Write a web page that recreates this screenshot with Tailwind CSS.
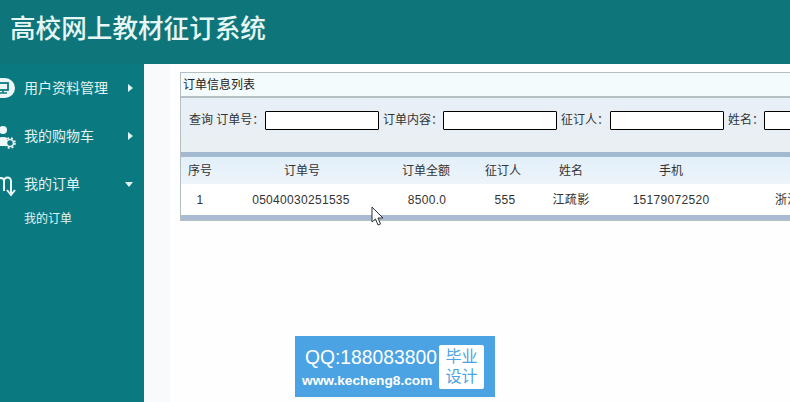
<!DOCTYPE html>
<html lang="zh-CN">
<head>
  <meta charset="UTF-8">
  <title>高校网上教材征订系统</title>
  <script src="https://cdn.jsdelivr.net/npm/@tailwindcss/browser@4"></script>
</head>
<body class="relative w-[790px] h-[402px] overflow-hidden bg-white text-[#333] text-[12px] font-['Liberation_Sans','Noto_Sans_CJK_SC',sans-serif]">
  <!-- Header -->
  <header class="h-[64px] bg-[#0e767a] flex items-center pl-[10px] pb-[4px]">
    <h1 class="text-[25.6px] leading-none font-medium text-[#e6f7f5] whitespace-nowrap">高校网上教材征订系统</h1>
  </header>
  <div class="flex h-[338px]">
    <!-- Sidebar -->
    <aside class="w-[144px] shrink-0 bg-[#0a7a80] text-[#e3f3f3]">
      <div class="h-[48px] flex items-center relative">
        <svg class="absolute left-[-10px] top-[14px] w-[25px] h-[20px]" viewBox="0 0 25 20"><rect x="0" y="0" width="25" height="20" rx="10" fill="#eef8f8"/><rect x="8" y="5" width="10" height="7" fill="none" stroke="#0b7c81" stroke-width="1.8"/><path d="M9 15h8M13 12v3" stroke="#0b7c81" stroke-width="1.6"/></svg>
        <span class="ml-[24px] text-[14px] w-[104px]">用户资料管理</span>
        <span class="w-0 h-0 border-y-[4px] border-y-transparent border-l-[5px] border-l-[#e3f3f3]"></span>
      </div>
      <div class="h-[48px] flex items-center relative">
        <svg class="absolute left-[-4px] top-[13px] w-[20px] h-[24px]" viewBox="0 0 20 24"><circle cx="7" cy="5" r="4" fill="#eef8f8"/><path d="M0 21c0-7 3-9 7-9 1.500 0 3 .4 4 1v8z" fill="#eef8f8"/><circle cx="14" cy="18" r="3.500" fill="none" stroke="#eef8f8" stroke-width="1.600"/><circle cx="14" cy="18" r="5" fill="none" stroke="#eef8f8" stroke-width="1.600" stroke-dasharray="2 2"/></svg>
        <span class="ml-[24px] text-[14px] w-[104px]">我的购物车</span>
        <span class="w-0 h-0 border-y-[4px] border-y-transparent border-l-[5px] border-l-[#e3f3f3]"></span>
      </div>
      <div class="h-[48px] flex items-center relative">
        <svg class="absolute left-[-3px] top-[13px] w-[20px] h-[24px]" viewBox="0 0 20 24" fill="none" stroke="#eef8f8" stroke-width="2"><path d="M1 18V8a3 3 0 0 1 6 0v10M7 8a3.500 3.500 0 0 1 7 0v12"/><path d="M10 17l4 5 4-5" stroke-width="2"/></svg>
        <span class="ml-[24px] text-[14px] w-[101px]">我的订单</span>
        <span class="w-0 h-0 border-x-[4.500px] border-x-transparent border-t-[5px] border-t-[#e3f3f3]"></span>
      </div>
      <div class="pl-[24px] pt-[2px] leading-[18px]">我的订单</div>
    </aside>
    <!-- Main -->
    <main class="flex-1 min-w-0 bg-[#fdfefd] flex">
      <div class="w-[26px] shrink-0 bg-[#f8fafb]"></div>
      <div class="flex-1 min-w-0 pl-[10px] pt-[8px] overflow-hidden">
        <section class="w-[640px] border border-[#b4bfc0] border-r-0 bg-white">
          <div class="h-[25px] bg-[#f3fbfc] border-b-[2px] border-[#b5c0c2] pl-[2px] flex items-center text-[#222]">订单信息列表</div>
          <form class="h-[54px] bg-gradient-to-b from-[#e8eff7] to-[#e9eff2] pl-[8px] pt-[13px] flex items-start whitespace-nowrap text-[#333]">
            <label class="w-[76px] shrink-0 leading-[19px]">查询 订单号：</label>
            <input class="w-[114px] shrink-0 h-[19px] bg-white border border-black rounded-[1px]">
            <label class="w-[60px] shrink-0 leading-[19px] ml-[4px]">订单内容：</label>
            <input class="w-[114px] shrink-0 h-[19px] bg-white border border-black rounded-[1px]">
            <label class="w-[49px] shrink-0 leading-[19px] ml-[4px]">征订人：</label>
            <input class="w-[114px] shrink-0 h-[19px] bg-white border border-black rounded-[1px]">
            <label class="w-[36px] shrink-0 leading-[19px] ml-[4px]">姓名：</label>
            <input class="w-[114px] shrink-0 h-[19px] bg-white border border-black rounded-[1px]">
          </form>
          <div class="h-[5px] bg-[#a3b9d0]"></div>
          <div class="h-[27px] bg-gradient-to-b from-[#e2effa] to-[#eef5fa] flex items-center text-[#333]">
            <span class="w-[38px] text-center">序号</span>
            <span class="w-[166px] text-center">订单号</span>
            <span class="w-[82px] text-center">订单全额</span>
            <span class="w-[72px] text-center">征订人</span>
            <span class="w-[64px] text-center">姓名</span>
            <span class="w-[136px] text-center">手机</span>
          </div>
          <div class="h-[31px] bg-white flex items-center text-[#333] tracking-[0.3px]">
            <span class="w-[38px] text-center">1</span>
            <span class="w-[164px] text-center">05040030251535</span>
            <span class="w-[88px] text-center">8500.0</span>
            <span class="w-[68px] text-center">555</span>
            <span class="w-[64px] text-center">江疏影</span>
            <span class="w-[136px] text-center">15179072520</span>
            <span class="ml-[36px] whitespace-nowrap">浙江</span>
          </div>
          <div class="h-[5px] bg-[#a9bad3]"></div>
        </section>
      </div>
    </main>
  </div>
  <!-- Mouse cursor -->
  <svg class="absolute left-[371px] top-[206px] w-[14px] h-[20px]" viewBox="0 0 14 20"><path d="M1 1v15l3.500-3 2.500 6 2.500-1-2.500-6H12z" fill="#fff" stroke="#333" stroke-width="1"/></svg>
  <!-- Watermark -->
  <div class="absolute left-[295px] top-[336px] w-[200px] h-[61px] bg-[#4ba3e3] flex items-center">
    <div class="w-[144px] pl-[7px] pt-[3px] text-white font-bold whitespace-nowrap">
      <div class="text-[19.300px] leading-[22px] pl-[3px] font-normal">QQ:188083800</div>
      <div class="text-[13.700px] leading-[18px] mt-[3px]">www.kecheng8.com</div>
    </div>
    <div class="w-[45px] h-[44px] bg-white rounded-[2px] text-[#4ba3e3] text-[16px] leading-[20px] text-center flex flex-col justify-center">
      <span>毕业</span><span>设计</span>
    </div>
  </div>
</body>
</html>
